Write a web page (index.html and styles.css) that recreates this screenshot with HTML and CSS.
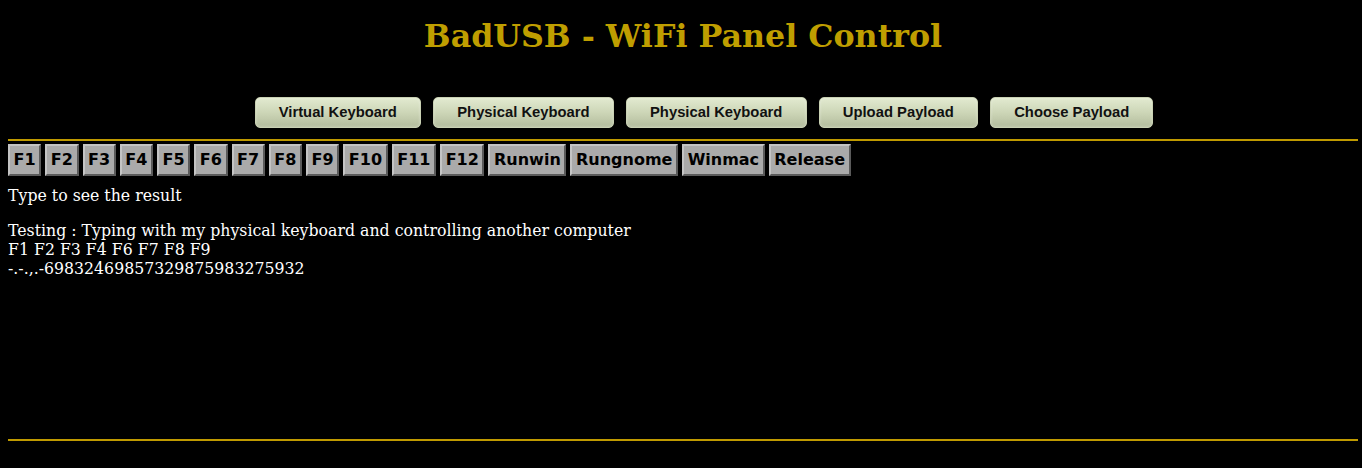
FILE: index.html
```html
<!DOCTYPE html>
<html lang="en">
<head>
<meta charset="utf-8">
<title>BadUSB - WiFi Panel Control</title>
<link rel="stylesheet" href="styles.css">
</head>
<body>
<h1 class="title">BadUSB - WiFi Panel Control</h1>
<nav class="nav">
  <button class="nav-btn">Virtual Keyboard</button>
  <button class="nav-btn">Physical Keyboard</button>
  <button class="nav-btn">Physical Keyboard</button>
  <button class="nav-btn">Upload Payload</button>
  <button class="nav-btn">Choose Payload</button>
</nav>
<hr class="rule rule-top">
<div class="keys">
  <button class="key">F1</button>
  <button class="key">F2</button>
  <button class="key">F3</button>
  <button class="key">F4</button>
  <button class="key">F5</button>
  <button class="key">F6</button>
  <button class="key">F7</button>
  <button class="key">F8</button>
  <button class="key">F9</button>
  <button class="key">F10</button>
  <button class="key">F11</button>
  <button class="key">F12</button>
  <button class="key">Runwin</button>
  <button class="key">Rungnome</button>
  <button class="key">Winmac</button>
  <button class="key">Release</button>
</div>
<p class="hint">Type to see the result</p>
<div class="output">Testing : Typing with my physical keyboard and controlling another computer<br>F1 F2 F3 F4 F6 F7 F8 F9<br>-.-.,.-69832469857329875983275932</div>
<hr class="rule">
</body>
</html>
```
FILE: styles.css
```css
html, body {
  background: #000;
}
body {
  margin: 0;
  padding: 8px 4px 8px 8px;
  color: #fff;
  font-family: "DejaVu Serif", serif;
  font-size: 15.75px;
  line-height: 19px;
}
.title {
  margin: 9px 0 0;
  text-align: center;
  font-family: "DejaVu Serif", serif;
  font-weight: bold;
  font-size: 31.7px;
  line-height: 37px;
  color: #bf9e00;
}
.nav {
  display: flex;
  justify-content: center;
  gap: 12px;
  margin-top: 43px;
  padding-left: 42px;
}
.nav-btn {
  box-sizing: border-box;
  height: 31px;
  padding: 0 23.2px;
  border: 1px solid #c9d1b3;
  border-radius: 5px;
  background: linear-gradient(to bottom, #e2ead0 0%, #cdd6b7 50%, #b3bc9d 100%);
  box-shadow: inset 0 0 3px rgba(255,255,255,0.35);
  color: #111;
  font-family: "Liberation Sans", Arial, sans-serif;
  font-weight: bold;
  font-size: 14.8px;
  line-height: 29px;
}
.rule {
  margin: 0;
  height: 0;
  border: 0;
  border-top: 2px solid #bf9a00;
}
.rule-top {
  margin-top: 11px;
}
.keys {
  display: flex;
  gap: 4px;
  margin-top: 3px;
}
.key {
  box-sizing: border-box;
  height: 32px;
  padding: 0 3.6px;
  border: 2px solid;
  border-color: #c4c4c4 #5a5a5a #5a5a5a #c4c4c4;
  background: #aaa;
  color: #000;
  font-family: "DejaVu Sans", sans-serif;
  font-weight: bold;
  font-size: 16px;
  line-height: 28px;
}
.hint {
  margin: 10px 0 16px;
}
.output {
  height: 218px;
}
```
